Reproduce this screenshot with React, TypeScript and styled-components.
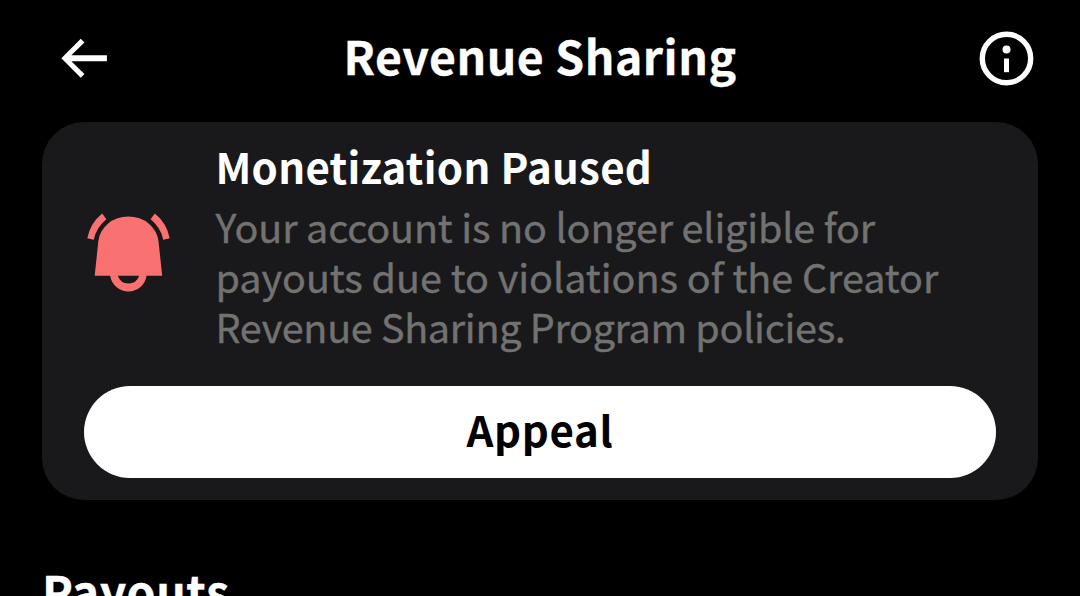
import React from "react";
import styled, { createGlobalStyle } from "styled-components";

const GlobalStyle = createGlobalStyle`
  * {
    box-sizing: border-box;
  }

  body {
    margin: 0;
    background: #000;
    overflow: hidden;
    font-family: "Noto Sans CJK JP", "Open Sans", sans-serif;
  }
`;

const Screen = styled.main`
  height: 596px;
  overflow: hidden;
  background: #000;
  color: #fff;
`;

const Header = styled.header`
  display: grid;
  grid-template-columns: 1fr auto 1fr;
  align-items: start;
  height: 122px;
  padding: 27px 42px 0;
`;

const IconButton = styled.button<{ $end?: boolean }>`
  display: flex;
  justify-self: ${({ $end }) => ($end ? "end" : "start")};
  margin-left: ${({ $end }) => ($end ? 0 : 10)}px;
  padding: 0;
  border: 0;
  background: none;
  color: inherit;
`;

const Title = styled.h1`
  margin: -2px 0 0 0;
  font-size: 46.4px;
  line-height: 60px;
  font-weight: 700;
  letter-spacing: 0.5px;
  white-space: nowrap;
  -webkit-text-stroke: 0.3px currentColor;
`;

const Card = styled.section`
  height: 378px;
  margin: 0 42px;
  padding: 18px 42px 0;
  border-radius: 42px;
  background: #19191b;
`;

const Notice = styled.div`
  display: flex;
  height: 246px;
`;

const BellIcon = styled.svg`
  flex: none;
  margin: 70px 46px 0 0;
`;

const NoticeTitle = styled.h2`
  margin: 0 0 0 -0.5px;
  font-size: 42px;
  line-height: 52px;
  font-weight: 700;
  letter-spacing: 0.28px;
  white-space: nowrap;
`;

const NoticeText = styled.p`
  margin: 9px 0 0 -0.5px;
  color: #727271;
  font-size: 39.5px;
  line-height: 50px;
  -webkit-text-stroke: 0.4px currentColor;
`;

const Line = styled.span<{ $spacing: number }>`
  display: block;
  white-space: nowrap;
  letter-spacing: ${({ $spacing }) => $spacing}px;
`;

const AppealButton = styled.button`
  display: block;
  width: 100%;
  height: 92px;
  padding: 0 0 6px;
  border: 0;
  border-radius: 46px;
  background: #fff;
  color: #000;
  font-family: inherit;
  font-size: 42px;
  line-height: 60px;
  font-weight: 700;
  letter-spacing: 0.7px;
`;

const SectionTitle = styled.h2`
  margin: 60px 0 0 42px;
  font-size: 46.4px;
  line-height: 60px;
  font-weight: 700;
  letter-spacing: 0.6px;
  -webkit-text-stroke: 0.3px currentColor;
`;

const App: React.FC = () => {
    return (
        <Screen>
            <GlobalStyle />
            <Header>
                <IconButton aria-label="Back">
                    <svg width="63" height="63" viewBox="0 0 24.2 24.2" fill="currentColor">
                        <path d="M7.414 13.15l5.043 4.89-1.414 1.42L3.586 12l7.457-7.46 1.414 1.42L7.414 10.85H21.1v2.3H7.414z" />
                    </svg>
                </IconButton>
                <Title>Revenue Sharing</Title>
                <IconButton $end aria-label="Information">
                    <svg width="62" height="62" viewBox="976 27 62 62" fill="currentColor">
                        <circle cx="1006.5" cy="58.5" r="24.2" fill="none" stroke="currentColor" strokeWidth="5.4" />
                        <circle cx="1006.5" cy="49.5" r="4" />
                        <rect x="1004" y="58.5" width="5" height="13.7" />
                    </svg>
                </IconButton>
            </Header>

            <Card>
                <Notice>
                    <BellIcon width="86" height="84" viewBox="84 210 86 84" fill="#f97171">
                        <path d="M94.7 276L98.3 241.5A30.2 27 0 0 1 158.5 241.5L162.2 276H146.6A18.4 18.4 0 0 1 110.2 276ZM117.8 276A11.3 11.3 0 0 0 139.2 276Z" fillRule="evenodd" transform="translate(0 -0.2)" />
                        <path d="M87.3 238.3A41.8 41.8 0 0 1 102.2 213.5L106.4 219.3A35 35 0 0 0 93.8 239.7Z" />
                        <path d="M169.7 238.3A41.8 41.8 0 0 0 154.8 213.5L150.6 219.3A35 35 0 0 1 163.2 239.7Z" />
                    </BellIcon>
                    <div>
                        <NoticeTitle>Monetization Paused</NoticeTitle>
                        <NoticeText>
                            <Line $spacing={-0.14}>Your account is no longer eligible for </Line>
                            <Line $spacing={-0.02}>payouts due to violations of the Creator </Line>
                            <Line $spacing={-0.3}>Revenue Sharing Program policies.</Line>
                        </NoticeText>
                    </div>
                </Notice>
                <AppealButton>Appeal</AppealButton>
            </Card>

            <SectionTitle>Payouts</SectionTitle>
        </Screen>
    );
};

export default App;
